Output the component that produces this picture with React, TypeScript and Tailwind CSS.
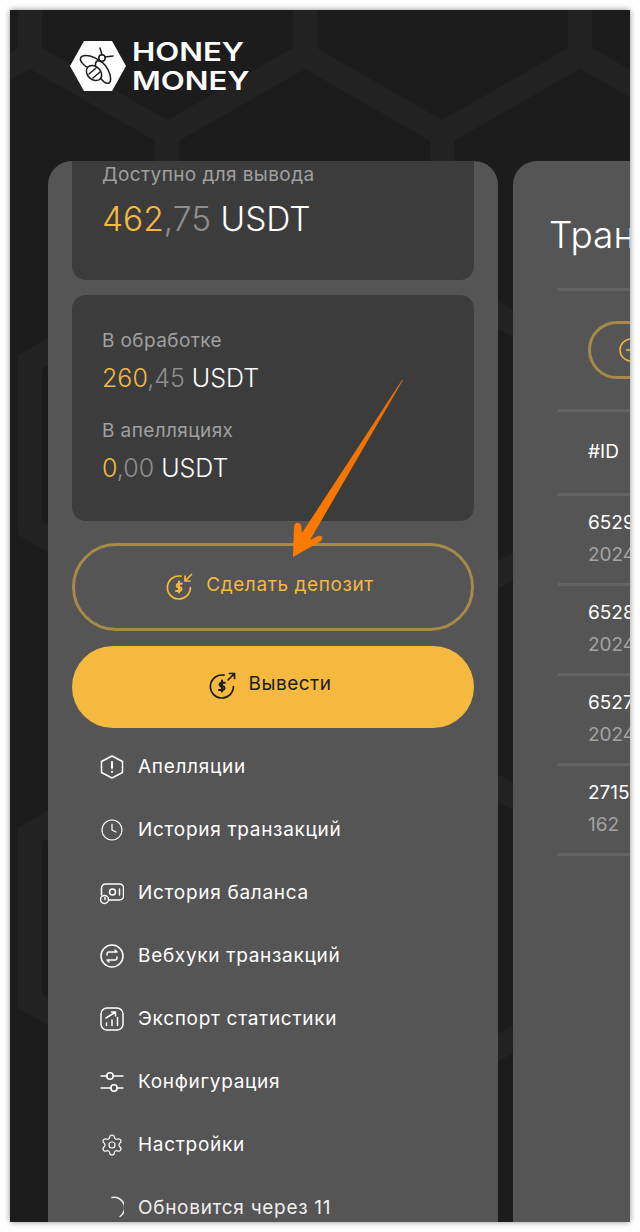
import type { ReactNode } from 'react';
import { Clock, Settings } from 'lucide-react';

const hexLines = [
  'M30 0V55L167 134L305 55V0',
  'M305 55L442 134L580 55V0',
  'M30 55L-40 95',
  'M580 55L650 95',
  'M167 134V283L30 362V528L167 607V756L30 835V1001L167 1080V1232',
  'M442 134V283L305 362V528L442 607V756L305 835V1001L442 1080V1232',
  'M167 283L305 362M442 283L580 362V528L442 607M167 607L305 528',
  'M167 756L305 835M442 756L580 835V1001L442 1080M167 1080L305 1001',
];

function HexBackground() {
  return (
    <svg className="absolute left-0 top-0" width="640" height="1232" fill="none">
      {hexLines.map((d) => (
        <path key={d} d={d} stroke="#222222" strokeWidth="24" />
      ))}
    </svg>
  );
}

function Logo() {
  return (
    <div className="flex items-center gap-[6px]">
      <svg width="56" height="50" viewBox="0 0 56 50" fill="none">
        <path d="M14 0H42L56 25L42 50H14L0 25Z" fill="#ffffff" />
        <g stroke="#1c1c1c" strokeWidth="1.5" strokeLinecap="round" fill="#ffffff">
          <ellipse cx="22" cy="22" rx="12.5" ry="6" transform="rotate(25 22 22)" />
          <ellipse cx="33" cy="31" rx="12.5" ry="5.5" transform="rotate(62 33 31)" />
          <ellipse cx="24" cy="32" rx="8.5" ry="6.5" transform="rotate(42 24 32)" />
          <path d="M19 33L26 27M23 37L30 31" />
          <circle cx="32" cy="17" r="3.2" />
          <path d="M32 14L30 7M35 16L43 15" />
        </g>
      </svg>
      <div className="text-[26px] leading-[29px] font-semibold text-white [font-family:Inter,sans-serif]">
        <div className="origin-left scale-x-[1.2]">HONEY</div>
        <div className="origin-left scale-x-[1.2]">MONEY</div>
      </div>
    </div>
  );
}

function Amount({ whole, cents, big }: { whole: string; cents: string; big?: boolean }) {
  return (
    <p className={big ? 'text-[33.5px] leading-[40px] font-[350]' : 'text-[25px] leading-[32px] font-[350]'}>
      <span className="text-[#f4b93e]">{whole}</span>
      <span className="text-[#8e8e8e]">,{cents}</span>
      <span className="text-white"> USDT</span>
    </p>
  );
}

function MoneyIcon({ out, color }: { out?: boolean; color: string }) {
  return (
    <svg width="28" height="28" viewBox="0 0 28 28" fill="none" stroke={color} strokeWidth="1.7" strokeLinecap="round" strokeLinejoin="round">
      <path d="M16 3.2A11.5 11.5 0 1 0 25.4 14.5" />
      <path d="M14 8.5V19.5M16.8 10.8H12.8A1.9 1.9 0 0 0 12.8 14.3H15.2A1.9 1.9 0 0 1 15.2 17.9H11" strokeWidth="2" />
      {out ? (
        <path d="M20 8L26.5 1.5M21.5 1.5H26.5V6.5" />
      ) : (
        <path d="M26.5 1.5L20 8M20 3V8H25" />
      )}
    </svg>
  );
}

function AlertIcon() {
  return (
    <svg width="24" height="24" viewBox="0 0 24 24" fill="none" stroke="#fff" strokeWidth="1.5" strokeLinecap="round" strokeLinejoin="round">
      <path d="M12 1L22.5 6.5V17.5L12 23L1.5 17.5V6.5Z" />
      <path d="M12 7V13M12 16.8V17" strokeWidth="2" />
    </svg>
  );
}

function BalanceIcon() {
  return (
    <svg width="24" height="24" viewBox="0 0 24 24" fill="none" stroke="#fff" strokeWidth="1.5" strokeLinecap="round">
      <path d="M1.5 14V7A4 4 0 0 1 5.5 3H19.5A4 4 0 0 1 23.5 7V15A4 4 0 0 1 19.5 19H9" />
      <circle cx="12.5" cy="11" r="3" />
      <path d="M19.5 8V14" />
      <circle cx="4.5" cy="18.5" r="4" />
      <path d="M5 16.5V18.5" />
    </svg>
  );
}

function WebhookIcon() {
  return (
    <svg width="24" height="24" viewBox="0 0 24 24" fill="none" stroke="#fff" strokeWidth="1.5" strokeLinecap="round" strokeLinejoin="round">
      <circle cx="12" cy="12" r="11" />
      <path d="M7 11V10A2 2 0 0 1 9 8H17L15 6M17 13V14A2 2 0 0 1 15 16H7L9 18" />
    </svg>
  );
}

function ExportIcon() {
  return (
    <svg width="24" height="24" viewBox="0 0 24 24" fill="none" stroke="#fff" strokeWidth="1.5" strokeLinecap="round" strokeLinejoin="round">
      <rect x="1" y="1" width="22" height="22" rx="6" />
      <path d="M6.5 18.5V16M12 18.5V13M17.5 18.5V10.5" />
      <path d="M6 11L15 5.5M11.5 5H15.5V9" />
    </svg>
  );
}

function SlidersIcon() {
  return (
    <svg width="24" height="24" viewBox="0 0 24 24" fill="none" stroke="#fff" strokeWidth="1.5" strokeLinecap="round">
      <circle cx="10" cy="6" r="3.2" />
      <path d="M1 6H6.8M13.2 6H23" />
      <circle cx="14" cy="18" r="3.2" />
      <path d="M1 18H10.8M17.2 18H23" />
    </svg>
  );
}

const menu: { label: string; icon: ReactNode }[] = [
  { label: 'Апелляции', icon: <AlertIcon /> },
  { label: 'История транзакций', icon: <Clock size={30} strokeWidth={1.2} color="#fff" /> },
  { label: 'История баланса', icon: <BalanceIcon /> },
  { label: 'Вебхуки транзакций', icon: <WebhookIcon /> },
  { label: 'Экспорт статистики', icon: <ExportIcon /> },
  { label: 'Конфигурация', icon: <SlidersIcon /> },
  { label: 'Настройки', icon: <Settings size={30} strokeWidth={1.2} color="#fff" /> },
];

function MenuRow({ icon, label }: { icon: ReactNode; label: string }) {
  return (
    <div className="flex h-[63px] items-center gap-[14px] pl-[28px] text-[19px] tracking-[0.7px] text-white">
      <span className="flex w-[24px] items-center justify-center">{icon}</span>
      <span className="mt-[2px]">{label}</span>
    </div>
  );
}

function LeftPanel() {
  return (
    <aside className="h-[1200px] w-[450px] shrink-0 overflow-hidden rounded-t-[24px] bg-[#555555] px-[24px]">
      <div className="-mt-[20px] rounded-[14px] bg-[#3c3c3c] px-[30px] pb-[41px] pt-[22px]">
        <p className="text-[19px] leading-[24px] tracking-[0.4px] text-[#a0a0a0]">Доступно для вывода</p>
        <div className="mt-[12px]">
          <Amount whole="462" cents="75" big />
        </div>
      </div>

      <div className="mt-[15px] rounded-[14px] bg-[#3c3c3c] px-[30px] pb-[37px] pt-[34px]">
        <p className="text-[19px] leading-[24px] tracking-[0.4px] text-[#a0a0a0]">В обработке</p>
        <div className="mt-[9px]">
          <Amount whole="260" cents="45" />
        </div>
        <p className="mt-[25px] text-[19px] leading-[24px] tracking-[0.4px] text-[#a0a0a0]">В апелляциях</p>
        <div className="mt-[9px]">
          <Amount whole="0" cents="00" />
        </div>
      </div>

      <button
        type="button"
        className="mt-[22px] flex h-[88px] w-full items-center justify-center gap-[13px] rounded-full border-[3px] border-[#a78a47] pr-[7px] text-[19px] tracking-[0.6px] text-[#f4b93e]"
      >
        <MoneyIcon color="#f4b93e" />
        <span className="mb-[4px]">Сделать депозит</span>
      </button>
      <button
        type="button"
        className="mt-[15px] flex h-[82px] w-full items-center justify-center gap-[13px] rounded-full bg-[#f4b93e] pb-[2px] pr-[7px] text-[19px] tracking-[0.5px] text-[#1c1c1c]"
      >
        <MoneyIcon out color="#1c1c1c" />
        <span className="mb-[4px]">Вывести</span>
      </button>

      <nav className="mt-[7px]">
        {menu.map((item) => (
          <MenuRow key={item.label} icon={item.icon} label={item.label} />
        ))}
        <div className="flex h-[63px] items-center gap-[14px] pl-[28px] text-[19px] tracking-[0.7px] text-[#eeeeee]">
          <svg width="24" height="24" viewBox="0 0 24 24" fill="none" stroke="#eeeeee" strokeWidth="1.5" strokeLinecap="round">
            <path d="M12 1.5A10.5 10.5 0 0 1 20 20.5" />
          </svg>
          <span className="mt-[2px]">Обновится через 11</span>
        </div>
      </nav>
    </aside>
  );
}

const rows = [
  ['6529', '2024'],
  ['6528', '2024'],
  ['6527', '2024'],
  ['2715', '162'],
];

function RightPanel() {
  return (
    <section className="h-[1200px] w-[500px] shrink-0 rounded-t-[24px] bg-[#555555] pl-[45px] text-[19px] leading-[32px]">
      <h1 className="-ml-[9px] h-[127px] pt-[51px] text-[37px] leading-[46px] font-light text-white">Транзакции</h1>
      <div className="border-t-[3px] border-[#636363]">
        <div className="px-[30px] py-[30px]">
          <div className="flex h-[58px] w-[200px] items-center rounded-full border-[3px] border-[#a78a47] pl-[28px]">
            <svg width="24" height="24" viewBox="0 0 24 24" fill="none" stroke="#f4b93e" strokeWidth="1.5">
              <circle cx="12" cy="12" r="11" />
              <path d="M7 12H17" />
            </svg>
          </div>
        </div>
      </div>
      <div className="flex h-[84px] items-center border-t-[3px] border-[#636363] pb-[2px] pl-[30px] text-white">#ID</div>
      {rows.map(([id, date]) => (
        <div key={id} className="h-[90px] border-t-[3px] border-[#636363] pl-[30px] pt-[11px]">
          <p className="text-white">{id}</p>
          <p className="text-[#a3a3a3]">{date}</p>
        </div>
      ))}
      <div className="border-t-[3px] border-[#636363]" />
    </section>
  );
}

export default function App() {
  return (
    <div className="h-[1232px] w-[640px] bg-white p-[10px] [font-family:Inter,'Noto_Sans',sans-serif]">
      <div className="relative h-[1212px] w-[620px] overflow-hidden bg-[#1c1c1c] shadow-[0_0_6px_rgba(0,0,0,0.45)]">
        <div className="absolute -left-[10px] -top-[10px]">
          <HexBackground />
        </div>
        <div className="relative">
          <header className="flex h-[151px] items-start pl-[60px] pt-[27px]">
            <Logo />
          </header>
          <div className="flex gap-[15px] pl-[38px]">
            <LeftPanel />
            <RightPanel />
          </div>
        </div>
        <svg className="absolute left-[263px] top-[360px]" width="140" height="190" viewBox="273 370 140 190">
          <defs>
            <linearGradient id="arrow" x1="0" y1="0" x2="1" y2="0">
              <stop offset="0" stopColor="#ff7b00" />
              <stop offset="1" stopColor="#e86f00" />
            </linearGradient>
          </defs>
          <path
            d="M403 380L402 380L302 533L301 525Q299 522 296 523Q294 524 294 527L293 557L321 541Q323 539 322 537Q321 535 318 536L310 540Z"
            fill="url(#arrow)"
          />
        </svg>
      </div>
    </div>
  );
}
